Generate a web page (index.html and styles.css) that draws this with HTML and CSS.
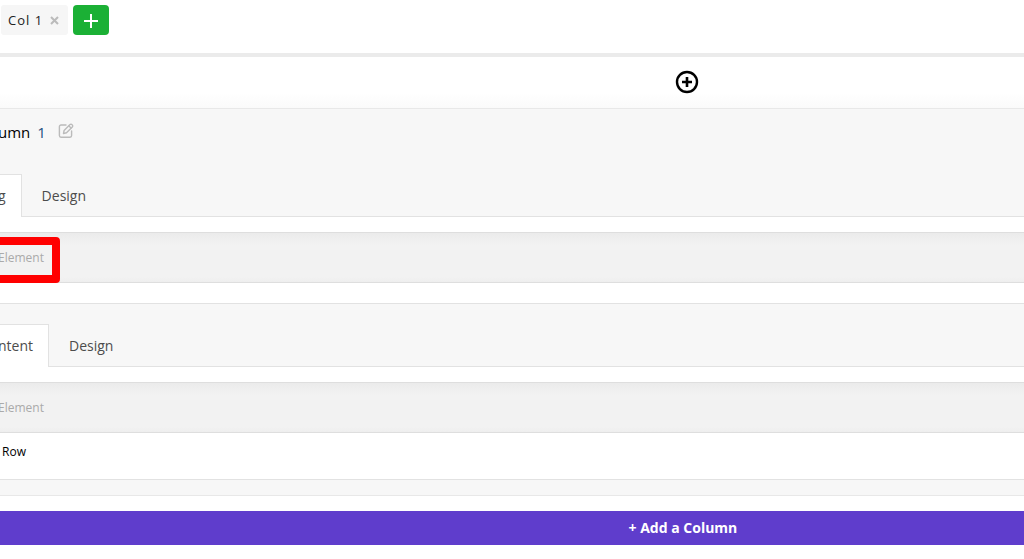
FILE: index.html
```html
<!DOCTYPE html>
<html lang="en">
<head>
    <meta charset="UTF-8">
    <title>Column Builder</title>
    <link rel="stylesheet" href="styles.css">
</head>
<body>
    <nav class="column-bar">
        <div class="column-chip">
            <button class="chip-label" type="button">Col 1</button>
            <button class="chip-remove" type="button" aria-label="Remove column">
                <svg width="9" height="9" viewBox="0 0 9 9"><path d="M1 1l7 7M8 1l-7 7" stroke="#bbb" stroke-width="2"/></svg>
            </button>
        </div>
        <button class="chip-add" type="button" aria-label="Add column">
            <svg width="16" height="16" viewBox="0 0 16 16"><path d="M8 1v14M1 8h14" stroke="#fff" stroke-width="2"/></svg>
        </button>
    </nav>

    <div class="insert-row">
        <button class="insert-button" type="button" aria-label="Insert row">
            <svg width="24" height="24" viewBox="0 0 24 24" fill="none" stroke="#000">
                <circle cx="12" cy="12" r="10" stroke-width="2.4"/>
                <path d="M12 7v10M7 12h10" stroke-width="2.6"/>
            </svg>
        </button>
    </div>

    <main>
        <section class="column">
            <header class="column-header">
                <h2>umn <span class="column-number">1</span></h2>
                <button class="edit-button" type="button" aria-label="Rename column">
                    <svg width="16" height="16" viewBox="0 0 16 16" fill="none" stroke="#bbb" stroke-width="1.4" stroke-linejoin="round" stroke-linecap="round">
                        <path d="M8 2H3a1.6 1.6 0 0 0-1.6 1.6v9A1.6 1.6 0 0 0 3 14.2h9a1.6 1.6 0 0 0 1.6-1.6V8"/>
                        <path d="M5.5 10.500l.6-3L12 1.600a1.300 1.300 0 0 1 1.900 0l.4.4a1.300 1.300 0 0 1 0 1.900L8.500 9.800z"/>
                        <path d="M11 3l2 2"/>
                    </svg>
                </button>
            </header>

            <div class="tabs">
                <button class="tab active" type="button">g</button>
                <button class="tab" type="button">Design</button>
            </div>
            <div class="panel">
                <div class="element-bar">
                    <button class="add-element" type="button">Element</button>
                    <span class="highlight"></span>
                </div>
            </div>

            <div class="tabs tabs-inner">
                <button class="tab active" type="button">ntent</button>
                <button class="tab" type="button">Design</button>
            </div>
            <div class="panel panel-inner">
                <div class="element-bar">
                    <button class="add-element" type="button">Element</button>
                </div>
                <button class="add-row" type="button">Row</button>
            </div>
        </section>
    </main>

    <button class="add-column" type="button">+ Add a Column</button>
</body>
</html>
```

FILE: styles.css
```css
:root {
    --panel-bg: #f7f7f7;
    --bar-bg: #f2f2f2;
    --line: #e2e2e2;
    --purple: #5f3dcc;
    --green: #1bb035;
}

* {
    box-sizing: border-box;
}

body {
    margin: 0;
    background-color: #fff;
    color: #222;
    font-family: "Open Sans", "Noto Sans", sans-serif;
    font-size: 14px;
    line-height: 20px;
    overflow-x: hidden;
}

button {
    margin: 0;
    padding: 0;
    border: none;
    background: none;
    color: inherit;
    font: inherit;
    cursor: pointer;
}

svg {
    display: block;
}

/* Column switcher */
.column-bar {
    display: flex;
    gap: 5px;
    padding: 5px 1px 18px;
    border-bottom: 4px solid #ebebeb;
}

.column-chip {
    display: flex;
    align-items: center;
    gap: 7px;
    height: 30px;
    padding: 0 9px 0 7px;
    border-radius: 3px;
    background-color: #f6f6f6;
}

.chip-label {
    font-size: 13px;
    letter-spacing: 1px;
}

.chip-add {
    display: flex;
    align-items: center;
    justify-content: center;
    width: 36px;
    height: 30px;
    padding-top: 1px;
    border-radius: 4px;
    background-color: var(--green);
}

.insert-row {
    display: flex;
    justify-content: center;
    padding: 13px 0 14px calc(34% + 2px);
    background: linear-gradient(#fff 70%, #fafafa);
}

/* Column, runs past the left edge of the window */
main {
    margin-left: -2px;
}

.column {
    padding-bottom: 15px;
    border-top: 1px solid #e8e8e8;
    border-bottom: 1px solid #e8e8e8;
    background-color: var(--panel-bg);
}

.column-header {
    display: flex;
    align-items: center;
    gap: 12px;
    height: 65px;
    padding-bottom: 22px;
}

.column-header h2 {
    margin: 0;
    padding-top: 2px;
    font-size: 15px;
    font-weight: 400;
    color: #000;
}

.column-number {
    margin-left: 3px;
    color: #1c4f80;
}

.tabs {
    display: flex;
    border-bottom: 1px solid var(--line);
}

.tabs-inner {
    padding-top: 20px;
    border-top: 1px solid var(--line);
}

.tab {
    height: 42px;
    padding: 2px 20px 0;
    color: #4c4c4c;
}

.tab.active {
    height: 43px;
    margin-bottom: -1px;
    padding: 0 15px 0 0;
    border-top: 1px solid var(--line);
    border-right: 1px solid var(--line);
    background-color: #fff;
}

.panel {
    padding: 15px 0 20px;
    background-color: #fff;
}

.panel-inner {
    padding-bottom: 0;
    border-bottom: 1px solid var(--line);
}

.element-bar {
    position: relative;
    height: 51px;
    border-top: 1px solid #dedede;
    border-bottom: 1px solid #dedede;
    background: linear-gradient(#ebebeb, var(--bar-bg) 12px, var(--bar-bg) 44px, #eee);
}

.add-element {
    display: block;
    height: 49px;
    font-size: 12px;
    color: #aaa;
}

/* Red frame over the add element button */
.highlight {
    position: absolute;
    top: 4px;
    left: -10px;
    width: 72px;
    height: 46px;
    border: 8px solid #f00;
    border-radius: 4px;
    pointer-events: none;
}

.add-row {
    display: block;
    height: 46px;
    padding: 0 4px 8px;
    font-size: 12px;
    color: #000;
}

.add-column {
    display: block;
    width: 100%;
    height: 34px;
    margin: 15px 0 14px;
    padding-left: calc(33% + 4px);
    background-color: var(--purple);
    color: #fff;
    font-weight: 700;
}
```
